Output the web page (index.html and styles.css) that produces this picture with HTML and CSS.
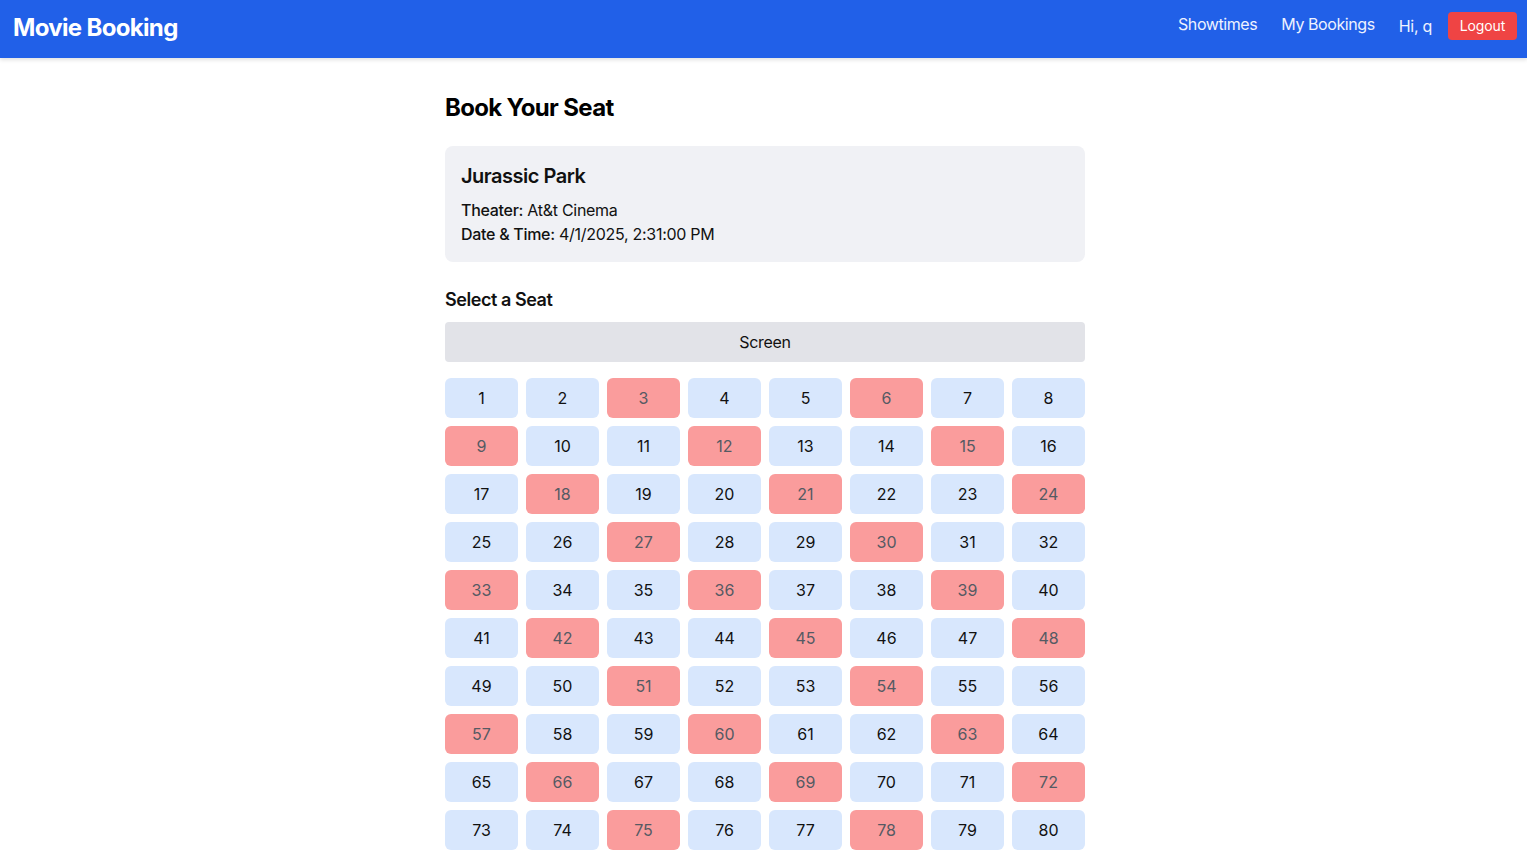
FILE: index.html
```html
<!DOCTYPE html>
<html lang="en">
<head>
<meta charset="utf-8">
<title>Movie Booking</title>
<link rel="stylesheet" href="styles.css">
</head>
<body>
<header class="topbar">
  <div class="brand">Movie Booking</div>
  <nav class="nav">
    <a class="nav-link" href="#">Showtimes</a>
    <a class="nav-link" href="#">My Bookings</a>
    <span class="greet">Hi, q</span>
    <button class="logout">Logout</button>
  </nav>
</header>
<div class="shift">
<main class="main">
  <h1 class="page-title">Book Your Seat</h1>
  <section class="info-card">
    <h2 class="movie-title">Jurassic Park</h2>
    <p class="info-line"><span class="label">Theater:</span> At&amp;t Cinema</p>
    <p class="info-line"><span class="label">Date &amp; Time:</span> 4/1/2025, 2:31:00 PM</p>
  </section>
  <h3 class="section-title">Select a Seat</h3>
  <div class="screen">Screen</div>
  <div class="seats" id="seats">
    <button class="seat">1</button><button class="seat">2</button><button class="seat booked">3</button><button class="seat">4</button><button class="seat">5</button><button class="seat booked">6</button><button class="seat">7</button><button class="seat">8</button>
    <button class="seat booked">9</button><button class="seat">10</button><button class="seat">11</button><button class="seat booked">12</button><button class="seat">13</button><button class="seat">14</button><button class="seat booked">15</button><button class="seat">16</button>
    <button class="seat">17</button><button class="seat booked">18</button><button class="seat">19</button><button class="seat">20</button><button class="seat booked">21</button><button class="seat">22</button><button class="seat">23</button><button class="seat booked">24</button>
    <button class="seat">25</button><button class="seat">26</button><button class="seat booked">27</button><button class="seat">28</button><button class="seat">29</button><button class="seat booked">30</button><button class="seat">31</button><button class="seat">32</button>
    <button class="seat booked">33</button><button class="seat">34</button><button class="seat">35</button><button class="seat booked">36</button><button class="seat">37</button><button class="seat">38</button><button class="seat booked">39</button><button class="seat">40</button>
    <button class="seat">41</button><button class="seat booked">42</button><button class="seat">43</button><button class="seat">44</button><button class="seat booked">45</button><button class="seat">46</button><button class="seat">47</button><button class="seat booked">48</button>
    <button class="seat">49</button><button class="seat">50</button><button class="seat booked">51</button><button class="seat">52</button><button class="seat">53</button><button class="seat booked">54</button><button class="seat">55</button><button class="seat">56</button>
    <button class="seat booked">57</button><button class="seat">58</button><button class="seat">59</button><button class="seat booked">60</button><button class="seat">61</button><button class="seat">62</button><button class="seat booked">63</button><button class="seat">64</button>
    <button class="seat">65</button><button class="seat booked">66</button><button class="seat">67</button><button class="seat">68</button><button class="seat booked">69</button><button class="seat">70</button><button class="seat">71</button><button class="seat booked">72</button>
    <button class="seat">73</button><button class="seat">74</button><button class="seat booked">75</button><button class="seat">76</button><button class="seat">77</button><button class="seat booked">78</button><button class="seat">79</button><button class="seat">80</button>
  </div>
</main>
</div>
</body>
</html>
```
FILE: styles.css
```css
* { box-sizing: border-box; }
html, body { margin: 0; padding: 0; }
body {
  font-family: Inter, "Noto Sans", "Liberation Sans", sans-serif;
  color: #111;
  background: #fff;
  letter-spacing: -0.018em;
}
.topbar {
  height: 58px;
  background: #2160e8;
  display: flex;
  align-items: center;
  justify-content: space-between;
  padding: 0 10px 0 13px;
  box-shadow: 0 2px 4px rgba(0,0,0,0.12);
  position: relative;
}
.brand {
  color: #fff;
  font-size: 24px;
  font-weight: 700;
  line-height: 32px;
  margin-top: -3px;
  letter-spacing: -0.028em;
}
.nav {
  align-self: stretch;
  display: flex;
  align-items: flex-start;
  padding-top: 12px;
}
.nav-link {
  color: #eef2ff;
  text-decoration: none;
  font-size: 16px;
  line-height: 24px;
  margin-right: 24px;
  letter-spacing: -0.026em;
}
.greet {
  color: #eef2ff;
  font-size: 16px;
  line-height: 24px;
  margin-right: 16px;
  margin-top: 2px;
}
.logout {
  background: #ef4444;
  color: #fff;
  border: none;
  border-radius: 4px;
  font-family: inherit;
  font-size: 14px;
  line-height: 20px;
  padding: 4px 0;
  width: 69px;
  height: 28px;
  letter-spacing: -0.01em;
}
.shift { padding-left: 3px; }
.main {
  width: 640px;
  margin: 0 auto;
  padding-top: 34px;
  padding-bottom: 16px;
}
.page-title {
  font-size: 24px;
  line-height: 32px;
  font-weight: 700;
  margin: 0 0 22px;
  color: #000;
  letter-spacing: -0.028em;
}
.info-card {
  background: #f0f1f5;
  border-radius: 8px;
  padding: 16px;
  margin-bottom: 24px;
}
.movie-title {
  font-size: 20px;
  line-height: 28px;
  font-weight: 600;
  margin: 0 0 8px;
  letter-spacing: -0.025em;
}
.info-line {
  margin: 0;
  font-size: 16px;
  line-height: 24px;
}
.label { font-weight: 500; }
.section-title {
  font-size: 18px;
  line-height: 28px;
  font-weight: 600;
  margin: 0 0 8px;
  letter-spacing: -0.025em;
}
.screen {
  height: 40px;
  background: #e2e3e8;
  border-radius: 4px;
  display: flex;
  align-items: center;
  justify-content: center;
  font-size: 16px;
  margin-bottom: 16px;
}
.seats {
  display: grid;
  grid-template-columns: repeat(8, 1fr);
  gap: 8px;
}
.seat {
  height: 40px;
  border: none;
  border-radius: 6px;
  background: #d8e7fd;
  font-family: inherit;
  font-size: 16px;
  color: #111;
  padding: 0;
}
.booked {
  background: #fa9c9c;
  color: #555a63;
}
```
